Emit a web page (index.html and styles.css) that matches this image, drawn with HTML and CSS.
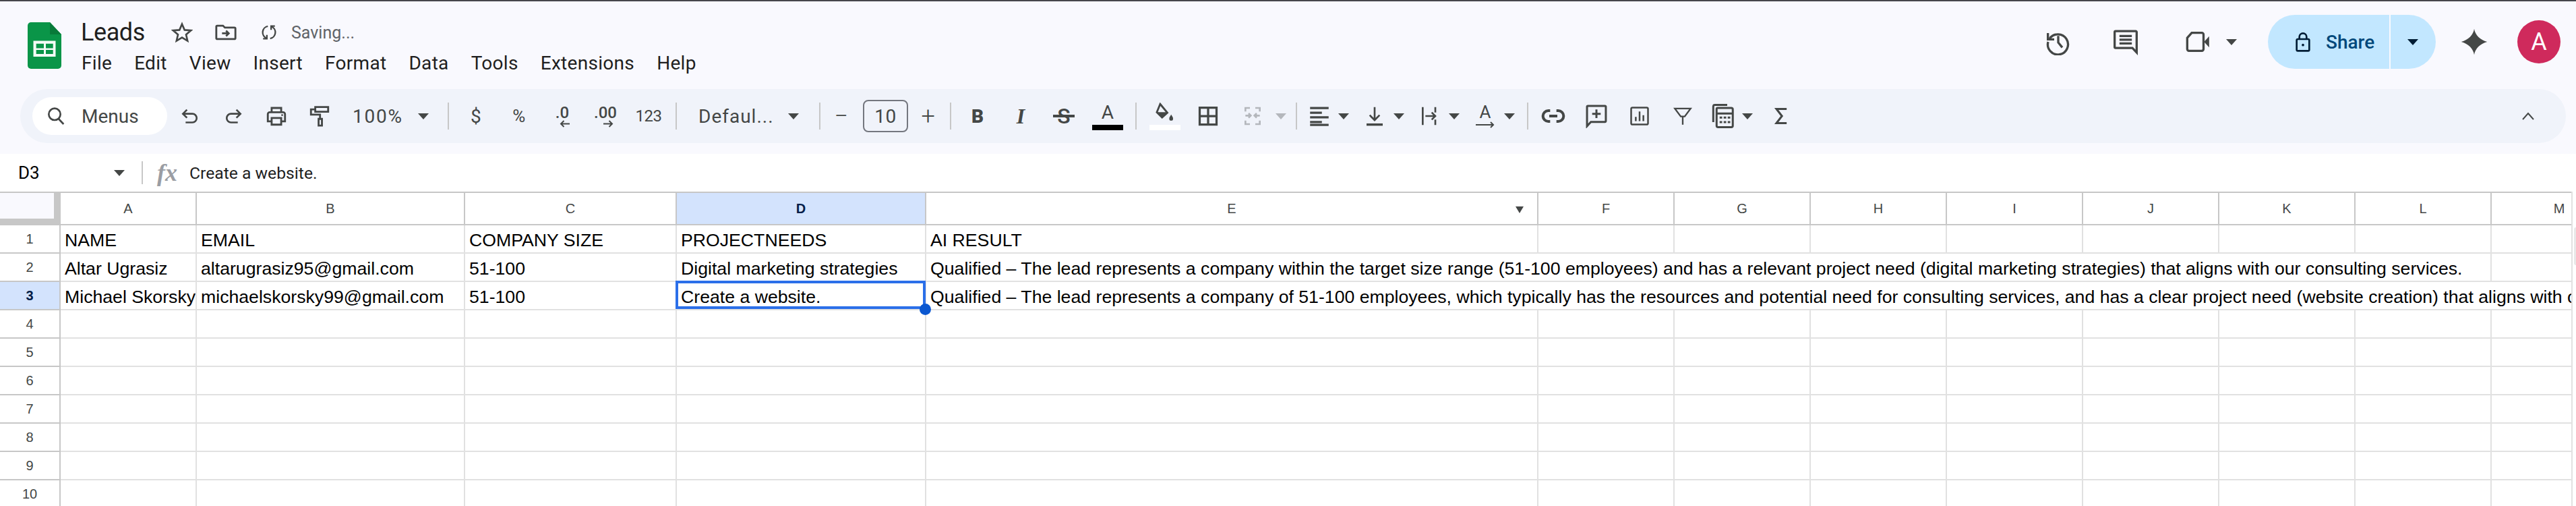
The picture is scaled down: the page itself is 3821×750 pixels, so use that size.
FILE: index.html
```html
<!DOCTYPE html>
<html lang="en">
<head>
<meta charset="utf-8">
<title>Leads - Google Sheets</title>
<link rel="stylesheet" href="styles.css">
</head>
<body>
<header class="top">
  <svg class="logo" width="50" height="69" viewBox="0 0 50 69"><path class="lg" d="M5 0H33L50 18V64a5 5 0 0 1-5 5H5a5 5 0 0 1-5-5V5a5 5 0 0 1 5-5Z"/><path class="ld" d="M33 0L50 18H33Z"/><path class="lw" d="M8.5 27.5H41.5V51H8.5ZM12.7 31.8V38.4H24V31.8ZM27 31.8V38.4H37.7V31.8ZM12.7 41V47H24V41ZM27 41V47H37.7V41Z"/></svg>
  <div class="titles">
    <div class="docrow">
      <span class="doc">Leads</span>
      <svg class="ic star" width="32" height="32" viewBox="0 0 24 24"><path d="M12 2.8l2.8 6.5 7 .6-5.3 4.6 1.6 6.9-6.1-3.7-6.1 3.7 1.6-6.9L2.2 9.9l7-.6z"/></svg>
      <svg class="ic folder" width="34" height="34" viewBox="0 0 24 24"><path d="M2 6a1 1 0 0 1 1-1h6l2 2h10a1 1 0 0 1 1 1v10a1 1 0 0 1-1 1H3a1 1 0 0 1-1-1z"/><path d="M8 13h7M12.2 10.2L15 13l-2.8 2.8"/></svg>
      <svg class="ic sync" width="28" height="28" viewBox="0 0 24 24"><path d="M9 19.5A8 8 0 0 1 10.5 4.2M15 4.5A8 8 0 0 1 13.5 19.8"/><path d="M4.5 20H9.3V15.2M19.5 4H14.7V8.8"/></svg>
      <span class="saving">Saving...</span>
    </div>
    <nav class="menu"><span>File</span><span>Edit</span><span>View</span><span>Insert</span><span>Format</span><span>Data</span><span>Tools</span><span>Extensions</span><span>Help</span></nav>
  </div>
  <div class="actions">
    <svg class="ic act act-h" width="40" height="40" viewBox="0 0 24 24"><path d="M4.3 9.2A9 9 0 1 1 3 12"/><path d="M2.8 4.2V9.8H8.4"/><path d="M12 6.8V12.6L15.6 17"/></svg>
    <svg class="ic act act-c" width="40" height="40" viewBox="0 0 24 24"><path d="M3 2.5H21a.8.8 0 0 1 .8.8V21.500L18 17.500H3a.8.8 0 0 1-.8-.8V3.300A.8.8 0 0 1 3 2.500Z"/><path d="M6.500 6.800H17.500M6.500 10.100H17.500M6.500 13.400H17.500"/></svg>
    <div class="meet">
      <svg class="ic" width="44" height="40" viewBox="0 0 26 24"><path d="M7 4H16a1.500 1.500 0 0 1 1.500 1.500V18.500A1.500 1.500 0 0 1 16 20H4.500A1.500 1.500 0 0 1 3 18.500V8.500Z"/><path class="f" d="M18 12L22.500 7V17Z"/></svg>
      <i class="tri meet-tri"></i>
    </div>
    <div class="share">
      <div class="share-main">
        <svg class="lock" width="32" height="34" viewBox="0 0 24 24"><path d="M8 9V6.500a4 4 0 0 1 8 0V9"/><rect x="5" y="9" width="14" height="13" rx="1.200"/><circle class="lockdot" cx="12" cy="15.500" r="1.400"/></svg>
        <span>Share</span>
      </div>
      <div class="share-more"><i class="tri tri-dark"></i></div>
    </div>
    <svg class="gem" width="42" height="42" viewBox="0 0 24 24"><path d="M12 1C12.700 6 17 10.500 23 12C17 13.500 12.700 18 12 23C11.300 18 7 13.500 1 12C7 10.500 11.300 6 12 1Z"/></svg>
    <div class="avatar">A</div>
  </div>
</header>

<div class="toolbar">
  <div class="search">
    <svg class="ic" width="32" height="32" viewBox="0 0 24 24"><circle cx="10.500" cy="10" r="6.500"/><path d="M15 15.200L20.500 21"/></svg>
    <span>Menus</span>
  </div>
  <span class="b"><svg class="ic" width="32" height="32" viewBox="0 0 24 24"><path d="M8.500 5L4 9.500L8.500 14"/><path d="M4.500 9.500H14.500a4.800 4.800 0 0 1 0 9.600H7"/></svg></span>
  <span class="b"><svg class="ic" width="32" height="32" viewBox="0 0 24 24"><path d="M15.500 5L20 9.500L15.500 14"/><path d="M19.500 9.500H9.500a4.800 4.800 0 0 0 0 9.600H17"/></svg></span>
  <span class="b"><svg class="ic" width="34" height="34" viewBox="0 0 24 24"><path d="M7 8V3.500H17V8"/><path d="M7 17.500H3V10a2 2 0 0 1 2-2H19a2 2 0 0 1 2 2V17.500H17"/><path d="M7 14H17V21H7Z"/><circle class="f" cx="18" cy="11" r="1"/></svg></span>
  <span class="b"><svg class="ic" width="34" height="34" viewBox="0 0 24 24"><path d="M7.500 2.500H21V7.500H7.500Z"/><path d="M7.500 5H3V10.500H12.500V15"/><path d="M11 15H14.500V22H11Z"/></svg></span>
  <span class="zoomctl"><span class="t">100%</span><i class="tri"></i></span>
  <i class="sep"></i>
  <span class="b t">$</span>
  <span class="b t pct">%</span>
  <span class="b dec"><span>.0</span><svg class="ic" width="18" height="11" viewBox="0 0 18 11"><path d="M16 5.500H3M7.500 1L3 5.500 7.500 10"/></svg></span>
  <span class="b dec"><span>.00</span><svg class="ic" width="18" height="11" viewBox="0 0 18 11"><path d="M2 5.500H15M10.500 1L15 5.500 10.500 10"/></svg></span>
  <span class="b t num">123</span>
  <i class="sep"></i>
  <span class="fontctl"><span class="t">Defaul...</span><i class="tri"></i></span>
  <i class="sep"></i>
  <span class="pm minus t">&#8722;</span>
  <span class="size t">10</span>
  <span class="pm plus t">+</span>
  <i class="sep sep-mid"></i>
  <span class="b fmt bold">B</span>
  <span class="b fmt ital">I</span>
  <span class="b fmt strike"><span class="strike-s">S</span><i class="strike-line"></i></span>
  <span class="b colorbtn"><span class="fmt-a">A</span><i class="bar bar-black"></i></span>
  <i class="sep"></i>
  <span class="b fillbtn"><svg class="ic" width="34" height="30" viewBox="0 0 24 21"><path d="M7 1.500L14.500 10.500L9 15.500L3.500 10Z"/><path class="f" d="M3.500 10H14.500L9 15.500Z"/><path class="f" d="M18.500 12.500C19.500 14.300 20.500 15.300 20.500 16.800a2 2 0 0 1-4 0C16.500 15.300 17.500 14.300 18.500 12.500Z"/></svg><i class="bar bar-white"></i></span>
  <span class="b"><svg class="ic thick" width="30" height="30" viewBox="0 0 24 24"><path d="M2 2H22V22H2ZM12 2V22M2 12H22"/></svg></span>
  <span class="b merge"><svg class="ic dis" width="32" height="32" viewBox="0 0 24 24"><path d="M4 7V3H9M15 3H20V7M4 17V21H9M15 21H20V17"/><path d="M4 11.500H10M7.500 9L10 11.500 7.500 14M20 11.500H14M16.500 9L14 11.500 16.500 14"/></svg></span>
  <span class="am"><i class="tri tri-dis"></i></span>
  <i class="sep sep-tight"></i>
  <span class="bi"><svg class="ic thick" width="30" height="30" viewBox="0 0 24 24"><path d="M1 2.500H23M1 8H15M1 13.500H23M1 19H15M1 22.500H23"/></svg></span><span class="am"><i class="tri"></i></span>
  <span class="bi"><svg class="ic" width="32" height="32" viewBox="0 0 24 24"><path d="M12 2V16M6.500 11L12 16.500 17.500 11"/><path class="thick" d="M3 21.500H21"/></svg></span><span class="am"><i class="tri"></i></span>
  <span class="bi"><svg class="ic" width="32" height="32" viewBox="0 0 24 24"><path d="M4 2V22M18 2V8M18 16V22M7 12H18M14 8L18 12 14 16"/></svg></span><span class="am"><i class="tri"></i></span>
  <span class="bi rot"><span class="rot-a">A</span><svg class="ic" width="32" height="12" viewBox="0 0 32 12"><path d="M2 6H28M24 2L28 6 24 10"/></svg></span><span class="am"><i class="tri"></i></span>
  <i class="sep sep-tight"></i>
  <span class="b"><svg class="ic thicker" width="36" height="24" viewBox="0 0 27 18"><path d="M10 3H8a6 6 0 0 0 0 12H10M17 3H19a6 6 0 0 1 0 12H17"/><path d="M9 9H18"/></svg></span>
  <span class="b"><svg class="ic" width="34" height="36" viewBox="0 0 22 24"><path d="M2.500 2H19.500a.8.8 0 0 1 .8.8V17a.8.8 0 0 1-.8.8H5.500L1.700 22V2.800A.8.8 0 0 1 2.500 2Z"/><path d="M11 5.500V14M6.800 9.800H15.200"/></svg></span>
  <span class="b"><svg class="ic" width="30" height="30" viewBox="0 0 24 24"><path d="M3.500 2H20.500a1.500 1.500 0 0 1 1.500 1.500V20.500a1.500 1.500 0 0 1-1.500 1.500H3.500A1.500 1.500 0 0 1 2 20.500V3.500A1.500 1.500 0 0 1 3.500 2Z"/><path d="M7.500 18V13M12 18V6.500M16.500 18V11" /></svg></span>
  <span class="b"><svg class="ic" width="28" height="28" viewBox="0 0 24 24"><path d="M2 2.500H22L14.500 12.500H9.500Z"/><path d="M12 12V23"/></svg></span>
  <span class="bi"><svg class="ic" width="34" height="36" viewBox="0 0 22 24"><path d="M1.200 18V2.500A1.500 1.500 0 0 1 2.700 1H15"/><path d="M5.500 4H19a1.500 1.500 0 0 1 1.500 1.500V21.500A1.500 1.500 0 0 1 19 23H6A1.500 1.500 0 0 1 4.500 21.500V5A1 1 0 0 1 5.500 4Z"/><path d="M4.500 9.500H20.500M7.500 13.500H10M11.500 13.500H14M15.500 13.500H18M7.500 18H10M11.500 18H14M15.500 18H18"/></svg></span><span class="am"><i class="tri"></i></span>
  <span class="b"><svg class="ic" width="24" height="28" viewBox="0 0 18 24"><path class="thick" d="M16 3H3L10 12 3 21H16"/></svg></span>
  <span class="b chev"><svg class="ic" width="22" height="16" viewBox="0 0 22 16"><path d="M3 13L11 4L19 13"/></svg></span>
</div>

<div class="fbar">
  <div class="namebox"><span>D3</span><i class="tri"></i></div>
  <i class="fsep"></i>
  <span class="fx">fx</span>
  <span class="ftext">Create a website.</span>
</div>

<main class="sheetwrap">
  <div class="sheet">
    <div class="corner"></div>
    <div class="ch">A</div><div class="ch">B</div><div class="ch">C</div><div class="ch on">D</div><div class="ch">E<i class="tri ch-tri"></i></div><div class="ch">F</div><div class="ch">G</div><div class="ch">H</div><div class="ch">I</div><div class="ch">J</div><div class="ch">K</div><div class="ch">L</div><div class="ch">M</div>

    <div class="rh">1</div><div class="c">NAME</div><div class="c">EMAIL</div><div class="c">COMPANY SIZE</div><div class="c">PROJECTNEEDS</div><div class="c">AI RESULT</div><div class="c"></div><div class="c"></div><div class="c"></div><div class="c"></div><div class="c"></div><div class="c"></div><div class="c"></div><div class="c"></div>

    <div class="rh">2</div><div class="c">Altar Ugrasiz</div><div class="c">altarugrasiz95@gmail.com</div><div class="c">51-100</div><div class="c">Digital marketing strategies</div><div class="c span8">Qualified – The lead represents a company within the target size range (51-100 employees) and has a relevant project need (digital marketing strategies) that aligns with our consulting services.</div><div class="c"></div>

    <div class="rh on">3</div><div class="c">Michael Skorsky</div><div class="c">michaelskorsky99@gmail.com</div><div class="c">51-100</div><div class="c sel">Create a website.<i class="handle"></i></div><div class="c span9">Qualified – The lead represents a company of 51-100 employees, which typically has the resources and potential need for consulting services, and has a clear project need (website creation) that aligns with our consulting services.</div>

    <div class="rh">4</div><div class="c"></div><div class="c"></div><div class="c"></div><div class="c"></div><div class="c"></div><div class="c"></div><div class="c"></div><div class="c"></div><div class="c"></div><div class="c"></div><div class="c"></div><div class="c"></div><div class="c"></div>
    <div class="rh">5</div><div class="c"></div><div class="c"></div><div class="c"></div><div class="c"></div><div class="c"></div><div class="c"></div><div class="c"></div><div class="c"></div><div class="c"></div><div class="c"></div><div class="c"></div><div class="c"></div><div class="c"></div>
    <div class="rh">6</div><div class="c"></div><div class="c"></div><div class="c"></div><div class="c"></div><div class="c"></div><div class="c"></div><div class="c"></div><div class="c"></div><div class="c"></div><div class="c"></div><div class="c"></div><div class="c"></div><div class="c"></div>
    <div class="rh">7</div><div class="c"></div><div class="c"></div><div class="c"></div><div class="c"></div><div class="c"></div><div class="c"></div><div class="c"></div><div class="c"></div><div class="c"></div><div class="c"></div><div class="c"></div><div class="c"></div><div class="c"></div>
    <div class="rh">8</div><div class="c"></div><div class="c"></div><div class="c"></div><div class="c"></div><div class="c"></div><div class="c"></div><div class="c"></div><div class="c"></div><div class="c"></div><div class="c"></div><div class="c"></div><div class="c"></div><div class="c"></div>
    <div class="rh">9</div><div class="c"></div><div class="c"></div><div class="c"></div><div class="c"></div><div class="c"></div><div class="c"></div><div class="c"></div><div class="c"></div><div class="c"></div><div class="c"></div><div class="c"></div><div class="c"></div><div class="c"></div>
    <div class="rh">10</div><div class="c"></div><div class="c"></div><div class="c"></div><div class="c"></div><div class="c"></div><div class="c"></div><div class="c"></div><div class="c"></div><div class="c"></div><div class="c"></div><div class="c"></div><div class="c"></div><div class="c"></div>
  </div>
  <aside class="rail"><div class="thumb"></div></aside>
</main>
</body>
</html>
```
FILE: styles.css
```css
* { box-sizing: border-box; }
html, body { margin: 0; padding: 0; }
body {
  width: 3821px;
  height: 750px;
  overflow: hidden;
  background: #f9f9fe;
  font-family: Roboto, "Liberation Sans", sans-serif;
  color: #1f1f1f;
}
i { display: block; font-style: normal; }

/* shared icon styles */
.ic { fill: none; stroke: #444746; stroke-width: 2; display: block; }
.ic .f { fill: #444746; stroke: none; }
.ic.thick, .ic .thick { stroke-width: 2.600; }
.ic.thicker { stroke-width: 3; }
.ic.dis { stroke: #b4b7bc; }
.tri {
  width: 0; height: 0;
  border-left: 8px solid transparent;
  border-right: 8px solid transparent;
  border-top: 9px solid #444746;
}
.tri-dark { border-top-color: #001d35; }
.tri-dis { border-top-color: #b4b7bc; }

/* title bar */
.top {
  height: 132px;
  border-top: 2px solid #46464c;
  display: flex;
  padding-left: 41px;
}
.logo { margin-top: 31px; flex: none; }
.lg { fill: #0a9548; }
.ld { fill: #087a39; }
.lw { fill: #f4fbf6; fill-rule: evenodd; }
.titles { margin-left: 29px; padding-top: 23px; }
.docrow { display: flex; align-items: center; height: 46px; }
.doc { font-size: 36px; letter-spacing: -.4px; color: #1f1f1f; width: 134px; }
.star { margin-right: 32px; }
.folder { margin-right: 33px; }
.sync { margin-right: 19px; }
.saving { font-size: 25px; color: #5f6368; }
.menu { display: flex; gap: 33px; font-size: 28px; letter-spacing: .3px; height: 44px; align-items: center; padding-left: 1px; }
.actions {
  margin-left: auto;
  padding: 20px 23px 0 0;
  height: 100px;
  display: flex;
  align-items: center;
}
.act-h { margin-right: 60px; }
.act-c { margin-right: 66px; }
.meet { display: flex; align-items: center; margin-right: 46px; }
.meet-tri { margin-left: 19px; }
.share {
  width: 249px; height: 80px;
  display: flex;
  border-radius: 40px;
  background: #c2e7ff;
  overflow: hidden;
  margin-right: 36px;
}
.share-main {
  width: 182px;
  display: flex; align-items: center;
  padding-left: 36px;
  gap: 18px;
  font-size: 28px; font-weight: 500;
  color: #00487a;
  border-right: 2px solid #f9f9fe;
}
.lock { fill: none; stroke: #001d35; stroke-width: 2; display: block; flex: none; }
.lockdot { fill: #001d35; stroke: none; }
.share-more { flex: 1; display: flex; align-items: center; justify-content: center; padding-right: 1px; }
.gem { fill: #444746; margin-right: 43px; flex: none; }
.avatar {
  width: 64px; height: 64px; border-radius: 50%;
  background: #cf2a5c; color: #fff;
  font-size: 36px;
  display: flex; align-items: center; justify-content: center;
}

/* toolbar */
.toolbar {
  height: 80px;
  margin: 0 15px 0 30px;
  padding-left: 18px;
  background: #f0f3fa;
  border-radius: 40px;
  display: flex;
  align-items: center;
  color: #444746;
  font-size: 28px;
}
.search {
  width: 200px; height: 56px;
  background: #fff;
  border-radius: 28px;
  display: flex; align-items: center;
  padding-left: 19px;
  gap: 22px;
  margin-right: 2px;
  font-size: 28px;
  flex: none;
}
.b { width: 64px; height: 64px; display: flex; align-items: center; justify-content: center; flex: none; }
.bi { width: 56px; height: 64px; display: flex; align-items: center; justify-content: center; flex: none; }
.am { width: 26px; display: flex; align-items: center; justify-content: flex-start; flex: none; }
.merge { width: 68px; }
.merge + .am { width: 22px; }
.t { letter-spacing: .5px; }
.zoomctl { width: 150px; display: flex; align-items: center; padding-left: 17px; gap: 22px; flex: none; }
.zoomctl .t { letter-spacing: 1.800px; }
.sep { width: 2px; height: 40px; background: #c7c7c7; margin: 0 8px; flex: none; }
.sep-tight { margin-right: 5px; }
.sep-mid { margin-right: 7px; }
.pct { font-size: 26px; }
.num { font-size: 24px; letter-spacing: -.5px; }
.dec { flex-direction: column; font-size: 24px; font-weight: 500; line-height: 22px; }
.dec svg { margin-left: 8px; }
.fontctl { width: 195px; padding-left: 24px; display: flex; align-items: center; gap: 21px; flex: none; }
.fontctl .t { letter-spacing: 1px; }
.pm { display: flex; align-items: center; justify-content: center; flex: none; font-size: 36px; font-weight: 300; }
.minus { width: 46px; }
.plus { width: 48px; margin-left: 6px; }
.size {
  width: 67px; height: 48px;
  margin-left: 9px;
  border: 2px solid #74777f;
  border-radius: 8px;
  display: flex; align-items: center; justify-content: center;
  flex: none;
}
.fmt { font-size: 28px; }
.bold { font-weight: 900; }
.ital { font-family: "Liberation Serif", serif; font-style: italic; font-weight: 700; font-size: 32px; }
.strike { position: relative; }
.strike-s { font-size: 32px; font-weight: 500; }
.strike-line { position: absolute; left: 16px; right: 16px; top: 30px; height: 4px; background: #444746; }
.colorbtn, .fillbtn { flex-direction: column; }
.colorbtn { width: 66px; }
.fmt-a { font-size: 28px; line-height: 26px; }
.colorbtn .fmt-a { margin-top: 2px; }
.bar { width: 46px; height: 8px; margin-top: 5px; }
.bar-black { background: #000; }
.bar-white { background: #fff; }
.fillbtn { margin-left: 2px; }
.fillbtn .bar { margin-top: 3px; }
.rot { flex-direction: column; }
.rot-a { font-size: 26px; line-height: 25px; font-weight: 400; }
.chev { margin-left: auto; margin-right: 24px; }

/* formula bar */
.fbar {
  height: 56px;
  margin-top: 16px;
  background: #fff;
  display: flex;
  align-items: center;
}
.namebox {
  width: 210px;
  padding: 0 25px 0 27px;
  display: flex; align-items: center; justify-content: space-between;
  font-size: 26px; color: #000;
  font-family: Roboto, sans-serif;
}
.fsep { width: 2px; height: 34px; background: #c7c7c7; }
.fx {
  margin-left: 21px; width: 48px;
  font: italic 700 36px "Liberation Serif", serif;
  color: #9a9da3;
}
.ftext { font-size: 24.700px; margin-left: 0; }

/* grid */
.sheetwrap { display: flex; background: #fff; height: 466px; overflow: hidden; }
.sheet {
  width: 3814px;
  overflow: hidden;
  flex: none;
  display: grid;
  grid-template-columns: 90px 202px 398px 314px 370px 908px repeat(8, 202px);
  grid-template-rows: 50px repeat(10, 42px);
  font-family: "Liberation Sans", Arial, sans-serif;
}
.corner {
  background: #f9f9fe;
  border-top: 2px solid #c7c7c7;
  border-right: 10px solid #c7c7c7;
  border-bottom: 10px solid #c7c7c7;
}
.ch, .rh {
  display: flex; align-items: center; justify-content: center;
  font-size: 20px;
  color: #444746;
  border-right: 2px solid #c7c7c7;
  border-bottom: 2px solid #c7c7c7;
  position: relative;
}
.ch { border-top: 2px solid #c7c7c7; }
.ch.on, .rh.on { background: #d3e3fd; color: #041e49; font-weight: 700; }
.ch-tri {
  position: absolute; right: 20px; top: 20px;
  border-left-width: 6px; border-right-width: 6px; border-top-width: 10px;
}
.c {
  display: flex; align-items: center;
  padding: 3px 4px 0 6px;
  font-size: 26.670px;
  line-height: 36px;
  white-space: nowrap;
  overflow: hidden;
  color: #000;
  border-right: 2px solid #e1e1e1;
  border-bottom: 2px solid #e1e1e1;
}
.span8 { grid-column: span 8; }
.span9 { grid-column: span 9; border-right: 0; }
.sel { position: relative; overflow: visible; z-index: 2; }
.sel::after {
  content: "";
  position: absolute;
  left: -2px; top: -2px; right: -1px; bottom: 0;
  border: 4px solid #2b6fe9;
}
.handle {
  position: absolute;
  right: -9px; bottom: -9px;
  width: 17px; height: 17px;
  border-radius: 50%;
  background: #0b57d0;
  z-index: 3;
}
.rail { flex: 1; border-left: 2px solid #e1e1e1; background: #fff; padding-top: 53px; }
.thumb { height: 56px; background: #e8e8e8; border-radius: 4px 0 0 4px; margin-left: 2px; }
```
